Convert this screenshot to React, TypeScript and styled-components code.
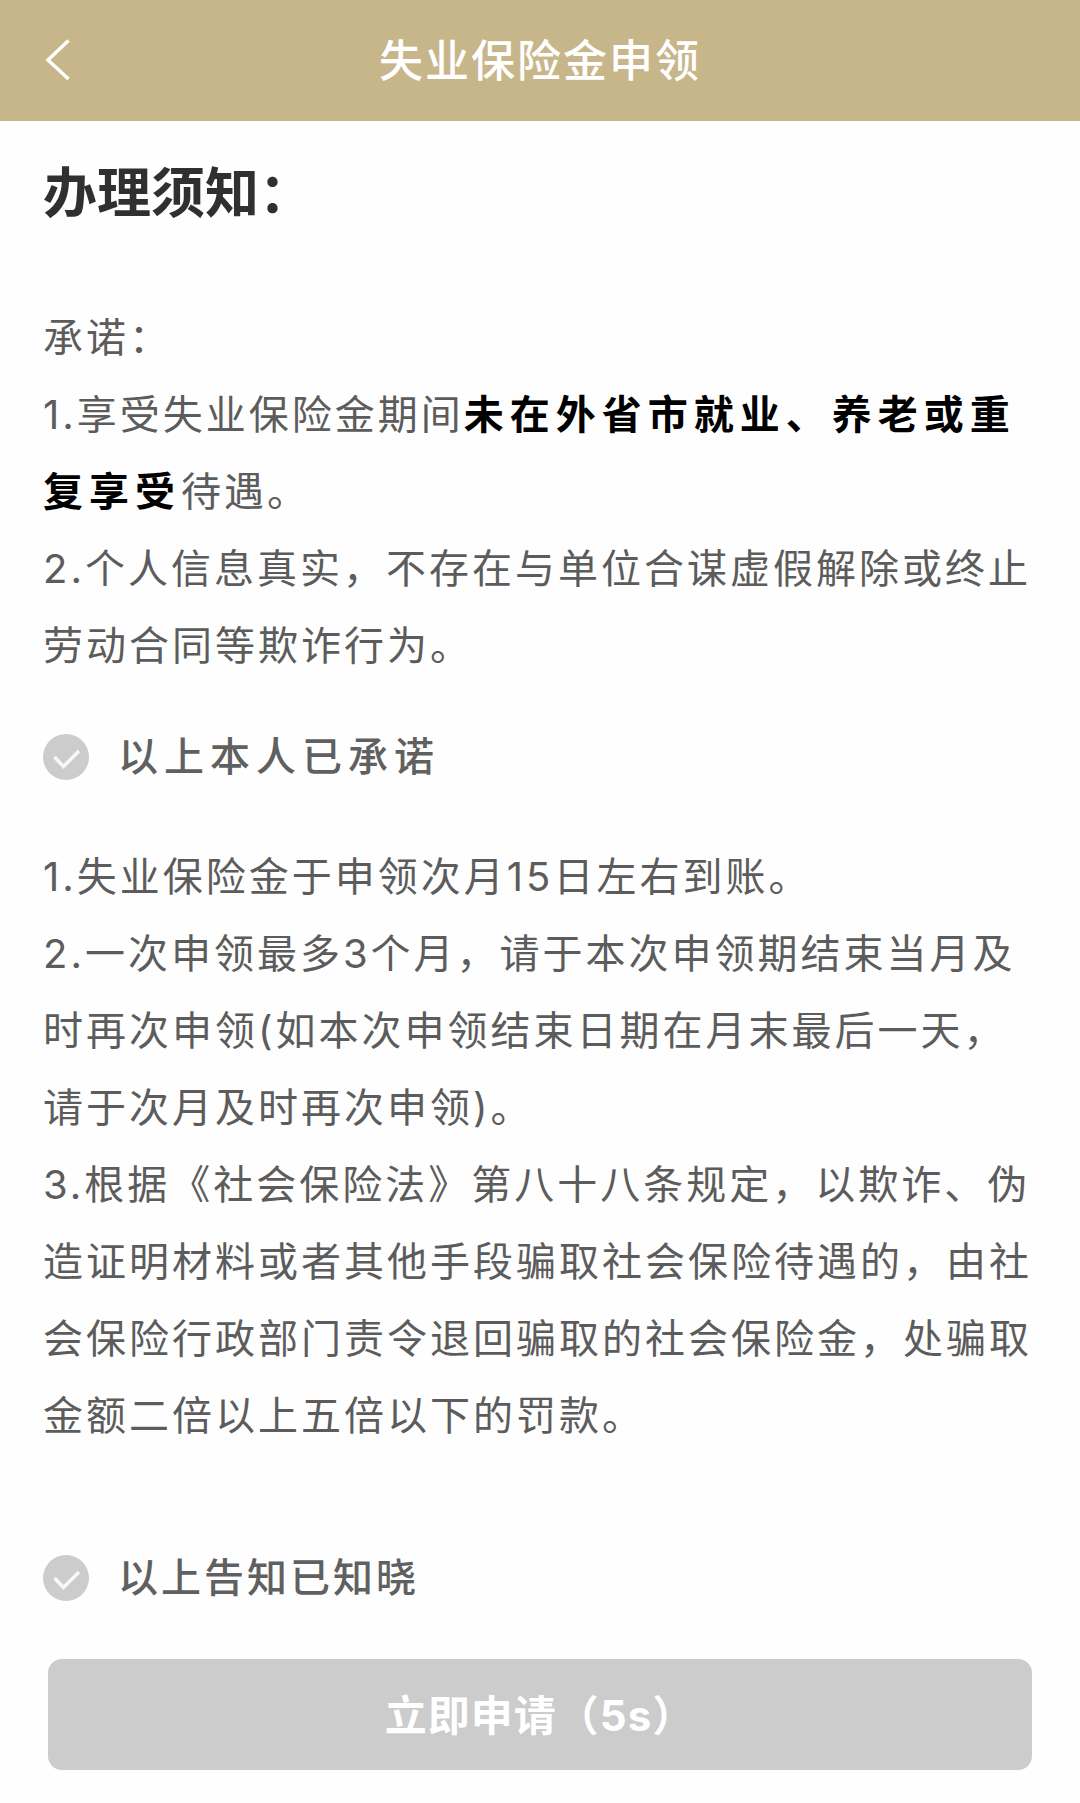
import React, { useState } from 'react';
import styled, { createGlobalStyle } from 'styled-components';

const GlobalStyle = createGlobalStyle`
  * {
    box-sizing: border-box;
  }
  body {
    margin: 0;
    background: #fefefe;
    color: #5c5c5c;
    font-family: Inter, "Noto Sans CJK SC", sans-serif;
    text-spacing-trim: space-all;
  }
`;

const Page = styled.div`
  display: flex;
  flex-direction: column;
`;

const Header = styled.header`
  display: grid;
  grid-template-columns: 80px 1fr 80px;
  align-items: center;
  height: 121px;
  padding: 0 18px;
  background: #c8b68b;
  color: #ffffff;
`;

const BackButton = styled.button`
  display: flex;
  align-items: center;
  justify-content: center;
  width: 80px;
  height: 80px;
  padding: 0;
  border: 0;
  background: transparent;
  color: inherit;
`;

const Title = styled.h1`
  margin: 0;
  font-size: 44px;
  font-weight: 500;
  line-height: 64px;
  letter-spacing: 2px;
  text-align: center;
`;

const Main = styled.main`
  display: flex;
  flex-direction: column;
  padding: 35px 43px;
`;

const Heading = styled.h2`
  margin: 0 0 67px;
  color: #303030;
  font-size: 54px;
  font-weight: 700;
  line-height: 76px;
`;

const Terms = styled.section`
  font-size: 40px;
  line-height: 77px;
  letter-spacing: 3px;
`;

const Line = styled.p`
  margin: 0;
`;

const Emphasis = styled.strong`
  color: #000000;
  font-weight: 700;
  letter-spacing: 6px;
`;

const CheckRow = styled.label<{ $top: number; $bottom: number; $wide?: boolean }>`
  display: flex;
  align-items: center;
  gap: 29px;
  margin: ${(p) => p.$top}px 0 ${(p) => p.$bottom}px;
  color: #606060;
  font-size: 40px;
  font-weight: 500;
  line-height: 48px;
  letter-spacing: ${(p) => (p.$wide ? 6 : 3)}px;
`;

const CheckMark = styled.span`
  display: grid;
  width: 46px;
  height: 46px;

  > * {
    grid-area: 1 / 1;
  }
`;

const CheckInput = styled.input`
  appearance: none;
  width: 46px;
  height: 46px;
  margin: 0;
  border-radius: 50%;
  background: #cccccc;
`;

const Tick = styled.svg`
  z-index: 1;
  pointer-events: none;
`;

const SubmitButton = styled.button`
  height: 111px;
  margin: 0 5px;
  padding: 0 0 4px;
  border: 0;
  border-radius: 14px;
  background: #cccccc;
  color: #ffffff;
  font-family: inherit;
  font-size: 42px;
  font-weight: 700;
  letter-spacing: 1px;
`;

type AgreementProps = {
  label: string;
  top: number;
  bottom: number;
  wide?: boolean;
};

function Agreement({ label, top, bottom, wide }: AgreementProps) {
  const [checked, setChecked] = useState(true);
  return (
    <CheckRow $top={top} $bottom={bottom} $wide={wide}>
      <CheckMark>
        <CheckInput type="checkbox" checked={checked} onChange={() => setChecked(!checked)} />
        <Tick width="46" height="46" viewBox="0 0 46 46" fill="none" aria-hidden="true">
          <path d="M11.500 23L20.500 32.500L36 17" stroke="#f8f8f8" strokeWidth="3.500" />
        </Tick>
      </CheckMark>
      <span>{label}</span>
    </CheckRow>
  );
}

export default function App() {
  return (
    <Page>
      <GlobalStyle />
      <Header>
        <BackButton type="button" aria-label="返回">
          <svg width="28" height="44" viewBox="0 0 28 44" fill="none" aria-hidden="true">
            <path d="M24.500 1.500L4 21L24.500 40" stroke="currentColor" strokeWidth="3.500" />
          </svg>
        </BackButton>
        <Title>失业保险金申领</Title>
      </Header>
      <Main>
        <Heading>办理须知：</Heading>
        <Terms>
          <Line>承诺：</Line>
          <Line>
            1.享受失业保险金期间<Emphasis>未在外省市就业、养老或重复享受</Emphasis>待遇。
          </Line>
          <Line>2.个人信息真实，不存在与单位合谋虚假解除或终止劳动合同等欺诈行为。</Line>
        </Terms>
        <Agreement label="以上本人已承诺" top={49} bottom={57} wide />
        <Terms>
          <Line>1.失业保险金于申领次月15日左右到账。</Line>
          <Line>2.一次申领最多3个月，请于本次申领期结束当月及时再次申领(如本次申领结束日期在月末最后一天，请于次月及时再次申领)。</Line>
          <Line>
            3.根据《社会保险法》第八十八条规定，以欺诈、伪造证明材料或者其他手段骗取社会保险待遇的，由社会保险行政部门责令退回骗取的社会保险金，处骗取金额二倍以上五倍以下的罚款。
          </Line>
        </Terms>
        <Agreement label="以上告知已知晓" top={100} bottom={57} />
        <SubmitButton type="button">立即申请（5s）</SubmitButton>
      </Main>
    </Page>
  );
}
